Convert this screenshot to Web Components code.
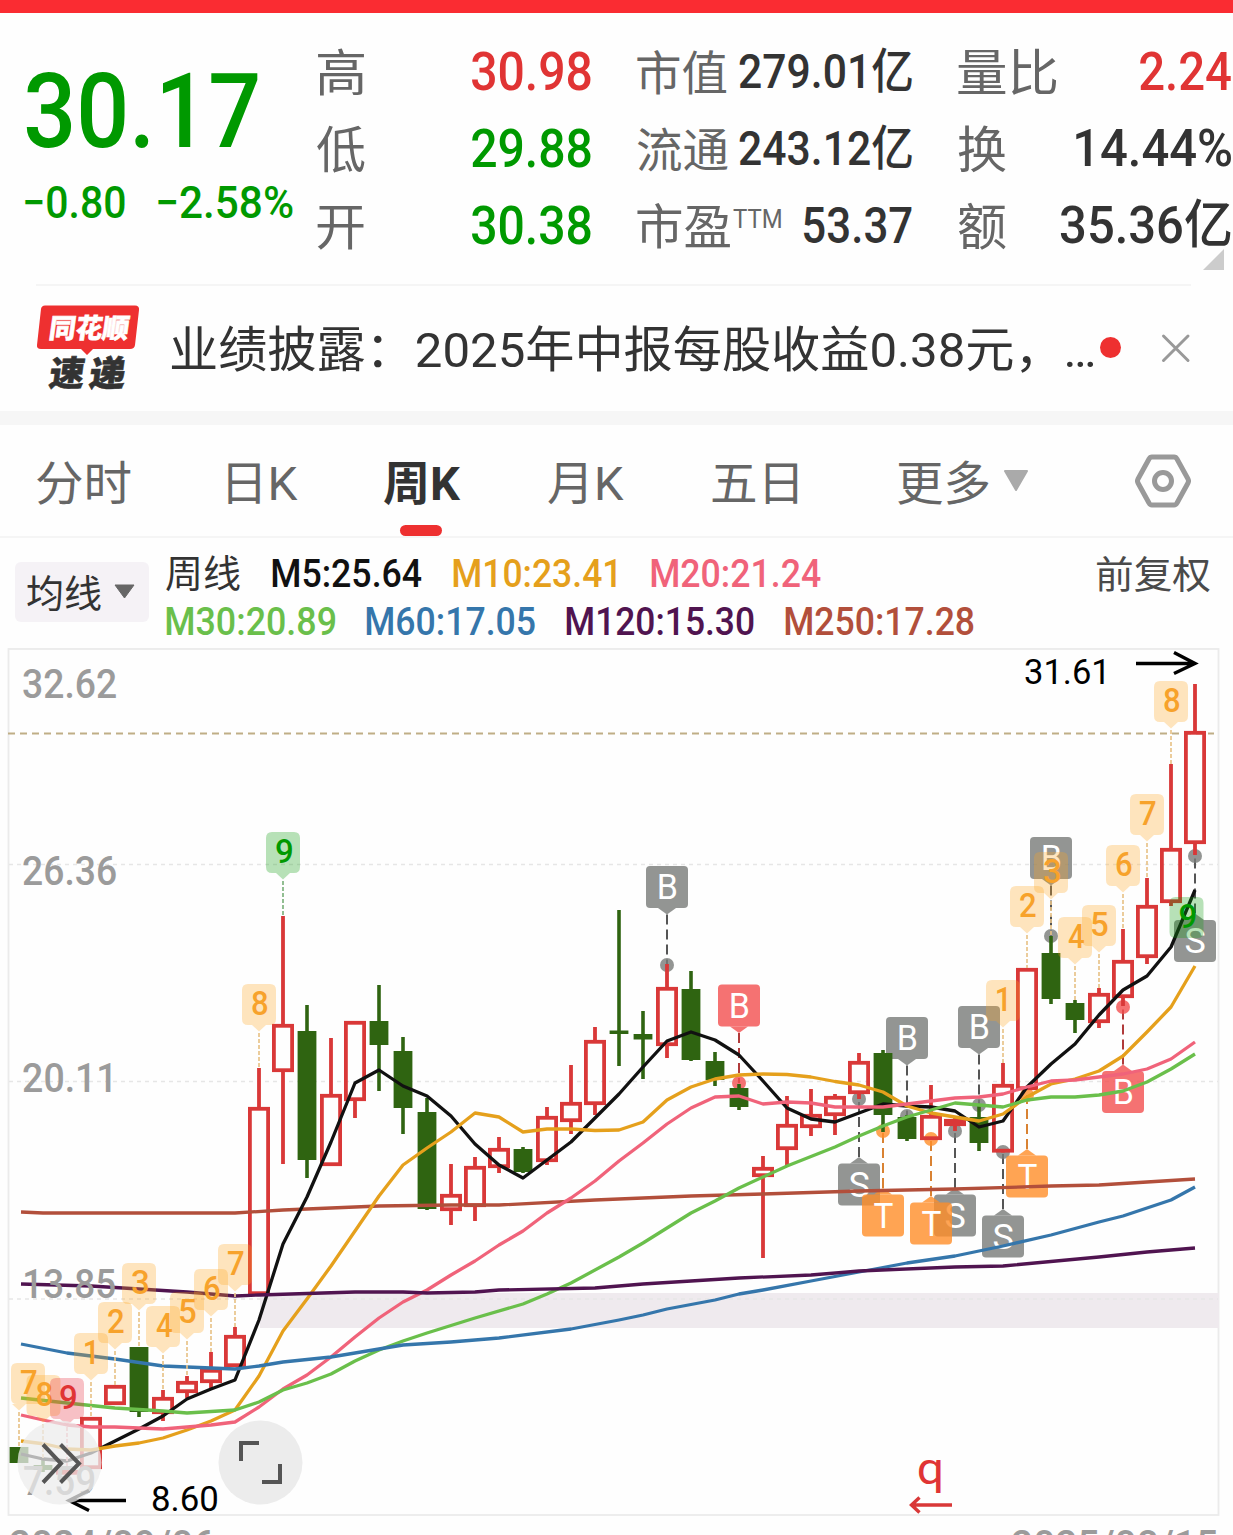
<!DOCTYPE html>
<html lang="zh-CN">
<head>
<meta charset="utf-8">
<title>周K</title>
<style>
  html, body {
    margin: 0;
    height: 1535px;
    overflow: hidden;
    background: #fefefe;
    font-family: Roboto, "Noto Sans CJK SC", sans-serif;
  }
</style>
</head>
<body>
<stock-page></stock-page>

<script>
const FONT = 'Roboto, "Noto Sans CJK SC", sans-serif'
const context = document.createElement('canvas').getContext('2d')

// Ink box of a text, so that it can be squeezed to a given width.
function measure (text, size, weight) {
  context.font = `${weight} ${size}px ${FONT}`
  const m = context.measureText(text)
  return { left: -m.actualBoundingBoxLeft, width: m.actualBoundingBoxLeft + m.actualBoundingBoxRight }
}

function createTemplate (html) {
  const template = document.createElement('template')
  template.innerHTML = html
  return template
}

const fitTemplate = createTemplate(`
  <style>
    :host { display: block; flex: none; white-space: nowrap; }
    span { display: inline-block; transform-origin: 0 50%; white-space: pre; }
    div { width: 0; }
  </style>
  <div><span><slot></slot></span></div>
`)

customElements.define('fit-text',
  /**
   * One line of text, stretched to the width in the w attribute.
   */
  class extends HTMLElement {
    constructor () {
      super()
      this.attachShadow({ mode: 'open' })
        .appendChild(fitTemplate.content.cloneNode(true))
    }

    connectedCallback () {
      const width = Number(this.getAttribute('w'))
      const size = Number(this.getAttribute('size'))
      const weight = this.getAttribute('weight') || '400'
      const ink = measure(this.textContent, size, weight)
      const scale = width / ink.width
      const span = this.shadowRoot.querySelector('span')

      this.style.width = `${width}px`
      this.style.font = `${weight} ${size}px/${Math.round(size * 1.2)}px ${FONT}`
      span.style.transform = `translateX(${-ink.left * scale}px) scaleX(${scale})`
    }
  }
)

const rowTemplate = createTemplate(`
  <style>
    :host { display: flex; justify-content: space-between; align-items: center; height: 77px; color: #333; }
    .label { display: flex; gap: 3px; padding-top: 3px; color: #666; }
  </style>
  <div class="label"><slot name="label"></slot></div>
  <slot></slot>
`)

customElements.define('quote-row',
  class extends HTMLElement {
    constructor () {
      super()
      this.attachShadow({ mode: 'open' })
        .appendChild(rowTemplate.content.cloneNode(true))
    }
  }
)

const headTemplate = createTemplate(`
  <style>
    :host { display: flex; height: 271.500px; position: relative; box-sizing: border-box; padding: 21px 2px 0 26px; }
    .price { width: 291px; color: #009900; padding-top: 16px; }
    .change { display: flex; gap: 33px; margin: 2px 0 0 -1px; }
    .columns { flex: 1; display: grid; grid-template-columns: 274px 275px 273px; column-gap: 46px; align-content: start; }
    .up { color: #e03434; }
    .down { color: #009900; }
    .tm { margin-top: 6px; }
    .corner { position: absolute; left: 1203px; top: 236px; }
  </style>
  <div class="price">
    <fit-text w="232" size="103" weight="500">30.17</fit-text>
    <div class="change">
      <fit-text w="100" size="45" weight="500">−0.80</fit-text>
      <fit-text w="135" size="45" weight="500">−2.58%</fit-text>
    </div>
  </div>
  <div class="columns">
    <div>
      <quote-row><fit-text slot="label" w="47" size="50">高</fit-text><fit-text class="up" w="119" size="53" weight="500">30.98</fit-text></quote-row>
      <quote-row><fit-text slot="label" w="48" size="50">低</fit-text><fit-text class="down" w="119" size="53" weight="500">29.88</fit-text></quote-row>
      <quote-row><fit-text slot="label" w="47" size="50">开</fit-text><fit-text class="down" w="119" size="53" weight="500">30.38</fit-text></quote-row>
    </div>
    <div>
      <quote-row><fit-text slot="label" w="90" size="47">市值</fit-text><fit-text w="173" size="48" weight="500">279.01亿</fit-text></quote-row>
      <quote-row><fit-text slot="label" w="91" size="47">流通</fit-text><fit-text w="173" size="48" weight="500">243.12亿</fit-text></quote-row>
      <quote-row><fit-text slot="label" w="93" size="48">市盈</fit-text><fit-text slot="label" class="tm" w="48" size="25">TTM</fit-text><fit-text w="108" size="50" weight="500">53.37</fit-text></quote-row>
    </div>
    <div>
      <quote-row><fit-text slot="label" w="99" size="50">量比</fit-text><fit-text class="up" w="91" size="53" weight="500">2.24</fit-text></quote-row>
      <quote-row><fit-text slot="label" w="48" size="50">换</fit-text><fit-text w="155" size="52" weight="500">14.44%</fit-text></quote-row>
      <quote-row><fit-text slot="label" w="48" size="50">额</fit-text><fit-text w="171" size="52" weight="500">35.36亿</fit-text></quote-row>
    </div>
  </div>
  <svg class="corner" width="21" height="21"><path d="M21 0V21H0Z" fill="#ccc"/></svg>
`)

customElements.define('quote-head',
  class extends HTMLElement {
    constructor () {
      super()
      this.attachShadow({ mode: 'open' })
        .appendChild(headTemplate.content.cloneNode(true))
    }
  }
)

const newsTemplate = createTemplate(`
  <style>
    :host { display: flex; align-items: center; height: 127px; margin: 0 42px 0 36px; border-top: 2px solid #f5f5f5; box-sizing: border-box; color: #333; }
    .logo { flex: none; width: 104px; height: 88px; margin: -3px 31px 0 0; overflow: visible; }
    fit-text { margin-top: 4px; }
    .dot { flex: none; width: 21px; height: 21px; border-radius: 50%; background: #ee3030; margin: -2px 40px 0 6px; }
    .close { flex: none; margin-top: -1px; }
  </style>
  <svg class="logo" viewBox="36 303 104 88">
    <path d="M45 305.500H135Q139.500 305.500 139 310L135 345Q134.500 349 130 349H93L87 355L81 349H41Q36.500 349 37 345L41 309Q41.500 305.500 45 305.500Z" fill="#ee3030"/>
    <g font-family='Roboto, "Noto Sans CJK SC", sans-serif' font-weight="900">
      <text transform="translate(48 338) skewX(-8)" font-size="27" textLength="80" lengthAdjust="spacingAndGlyphs" fill="#fff" stroke="#fff" stroke-width=".6">同花顺</text>
      <text transform="translate(48 385.500) skewX(-8)" font-size="35" textLength="35" lengthAdjust="spacingAndGlyphs" fill="#333" stroke="#333" stroke-width=".6">速</text>
      <text transform="translate(88 385.500) skewX(-8)" font-size="35" textLength="36" lengthAdjust="spacingAndGlyphs" fill="#333" stroke="#333" stroke-width=".6">递</text>
    </g>
  </svg>
  <fit-text w="923" size="48.5">业绩披露：2025年中报每股收益0.38元，…</fit-text>
  <div class="dot"></div>
  <svg class="close" width="30" height="30" fill="none" stroke="#999" stroke-width="3" stroke-linecap="round"><path d="M2.500 3L27 27.500M27 3L2.500 27.500"/></svg>
`)

customElements.define('news-bar',
  class extends HTMLElement {
    constructor () {
      super()
      this.attachShadow({ mode: 'open' })
        .appendChild(newsTemplate.content.cloneNode(true))
    }
  }
)

const tabsTemplate = createTemplate(`
  <style>
    :host { display: grid; grid-template-columns: 189px 158px 164px 164px 186px 105px 132px 56px; align-items: center; height: 127px; box-sizing: border-box; padding-left: 37px; border-top: 14px solid #f6f6f6; border-bottom: 2px solid #f5f5f5; color: #666; }
    fit-text { margin-top: 7px; }
    .active { align-self: stretch; display: flex; align-items: center; position: relative; color: #333; }
    .active::after { content: ""; position: absolute; left: 16px; bottom: 0; width: 42px; height: 11px; border-radius: 5.5px; background: #ee3030; }
  </style>
  <fit-text w="94" size="47">分时</fit-text>
  <fit-text w="70" size="47" style="margin-left:2px">日K</fit-text>
  <div class="active"><fit-text w="77" size="47" weight="700">周K</fit-text></div>
  <fit-text w="76" size="47">月K</fit-text>
  <fit-text w="86" size="47">五日</fit-text>
  <fit-text w="91" size="47">更多</fit-text>
  <svg width="26" height="22"><path d="M2 1H24L13 20Z" fill="#aaa" stroke="#aaa" stroke-width="2" stroke-linejoin="round"/></svg>
  <svg width="56" height="56" fill="none" stroke="#999" stroke-width="5" stroke-linejoin="round">
    <path d="M17 4H39Q41 4 42 6L53 26Q54 28 53 30L42 50Q41 52 39 52H17Q15 52 14 50L3 30Q2 28 3 26L14 6Q15 4 17 4Z"/>
    <circle cx="28" cy="28" r="8.500"/>
  </svg>
`)

customElements.define('period-tabs',
  class extends HTMLElement {
    constructor () {
      super()
      this.attachShadow({ mode: 'open' })
        .appendChild(tabsTemplate.content.cloneNode(true))
    }
  }
)

const legendTemplate = createTemplate(`
  <style>
    :host { display: flex; height: 110px; box-sizing: border-box; padding: 12px 23px 0 15px; }
    .select { display: flex; align-items: center; gap: 13px; width: 134px; height: 60px; margin: 12px 17px 0 0; padding: 4px 0 0 12px; box-sizing: border-box; border-radius: 6px; background: #f5f2f6; color: #333; }
    .select svg { margin-top: -6px; }
    .lines { flex: 1; }
    .line { display: flex; align-items: center; gap: 31px; height: 48px; }
    .m5 { color: #111; margin-left: 1px; }
    .m10 { color: #e5a01c; }
    .m20 { color: #f0637a; margin-left: 4px; }
    .m30 { color: #6abf4b; }
    .m60 { color: #3576ab; }
    .m120 { color: #501450; }
    .m250 { color: #b24f3b; }
    .adjust { color: #4a4a4a; padding-top: 2px; }
  </style>
  <div class="select">
    <fit-text w="74" size="38">均线</fit-text>
    <svg width="21" height="15"><path d="M1 1H20L10.500 14Z" fill="#666" stroke="#666" stroke-linejoin="round"/></svg>
  </div>
  <div class="lines">
    <div class="line">
      <fit-text w="74" size="38" style="color:#333">周线</fit-text>
      <fit-text class="m5" w="150" size="39" weight="500">M5:25.64</fit-text>
      <fit-text class="m10" w="163" size="39" weight="500">M10:23.41</fit-text>
      <fit-text class="m20" w="170" size="39" weight="500">M20:21.24</fit-text>
    </div>
    <div class="line">
      <fit-text class="m30" w="169" size="39" weight="500">M30:20.89</fit-text>
      <fit-text class="m60" w="169" size="39" weight="500">M60:17.05</fit-text>
      <fit-text class="m120" w="188" size="39" weight="500">M120:15.30</fit-text>
      <fit-text class="m250" w="189" size="39" weight="500">M250:17.28</fit-text>
    </div>
  </div>
  <fit-text class="adjust" w="113" size="38">前复权</fit-text>
`)

customElements.define('ma-legend',
  class extends HTMLElement {
    constructor () {
      super()
      this.attachShadow({ mode: 'open' })
        .appendChild(legendTemplate.content.cloneNode(true))
    }
  }
)

const STEP = 24
const FIRST = 19

// colour, high, body top, body bottom, low
const candles = [
  ['g', 1447, 1447, 1463, 1463], ['g', 1460, 1465, 1470, 1472], ['r', 1466, 1470, 1474, 1479],
  ['r', 1417, 1417, 1469, 1469], ['r', 1385, 1385, 1405, 1405], ['g', 1347, 1347, 1412, 1417],
  ['r', 1390, 1397, 1414, 1421], ['r', 1376, 1381, 1393, 1398], ['r', 1352, 1369, 1383, 1388],
  ['r', 1327, 1335, 1367, 1367], ['r', 1068, 1107, 1295, 1295], ['r', 916, 1024, 1072, 1164],
  ['g', 1005, 1031, 1160, 1178], ['r', 1038, 1094, 1166, 1166], ['r', 1021, 1021, 1101, 1118],
  ['g', 985, 1021, 1045, 1091], ['g', 1037, 1051, 1108, 1134], ['g', 1098, 1112, 1209, 1210],
  ['r', 1164, 1194, 1211, 1225], ['r', 1157, 1166, 1207, 1221], ['r', 1137, 1148, 1168, 1173],
  ['g', 1147, 1149, 1172, 1173], ['r', 1107, 1116, 1162, 1165], ['r', 1065, 1102, 1122, 1134],
  ['r', 1027, 1040, 1105, 1115], ['g', 910, 1030.5, 1034, 1066], ['g', 1011, 1034, 1039.5, 1079],
  ['r', 964, 987, 1046, 1058], ['g', 971, 989, 1060, 1061], ['g', 1052, 1061, 1080, 1086],
  ['g', 1084, 1088, 1107, 1110], ['r', 1156, 1167, 1177, 1258], ['r', 1096, 1124, 1150, 1166],
  ['r', 1089, 1114, 1128, 1136], ['r', 1094, 1096, 1116, 1135], ['r', 1053, 1061, 1094, 1099],
  ['g', 1050, 1053, 1115, 1132], ['g', 1115, 1117, 1139, 1141], ['r', 1085, 1115, 1140, 1140],
  ['r', 1117, 1119, 1126, 1131], ['g', 1105, 1117, 1143, 1151], ['r', 1063, 1084, 1152.5, 1152.5],
  ['r', 968, 968, 1090, 1090], ['g', 936, 953, 999, 1004], ['g', 1000, 1003, 1020, 1033],
  ['r', 988, 993, 1023, 1028], ['r', 929, 960, 998, 1006], ['r', 878, 905, 958, 964],
  ['r', 764, 848, 903, 906], ['r', 684, 731, 844, 855]
]

const averages = [
  ['#b24f3b', '21,1212 43,1213 235,1213 283,1210 331,1208 379,1206 451,1205 499,1205 595,1200 691,1196 763,1194 859,1191 955,1189 1051,1186 1099,1185 1147,1182 1195,1179'],
  ['#111', '21,1454 43,1459 67,1461 91,1453 115,1441 139,1429 163,1416 187,1399 211,1389 235,1380 259,1320 283,1244 307,1197 331,1142 355,1083 379,1070 403,1086 427,1096 451,1116 475,1144 499,1165 523,1178 547,1160 571,1142 595,1118 619,1094 643,1067 667,1041 691,1032 715,1040 739,1055 763,1081 787,1108 811,1119 835,1122 859,1113 883,1104 907,1106 931,1107 955,1111 979,1127 1003,1121 1027,1087 1051,1064 1075,1044 1099,1015 1123,990 1147,976 1171,947 1195,890'],
  ['#e5a01c', '21,1441 45,1444 67,1449 91,1450 115,1446 139,1443 163,1438 187,1430 211,1421 235,1410 259,1376 283,1331 307,1299 331,1266 355,1231 379,1196 403,1165 427,1148 451,1132 475,1113 499,1117 523,1132 547,1129 571,1129 595,1130.5 619,1130 643,1122 667,1100 691,1087 715,1079 739,1075 763,1074 787,1074.5 811,1077 835,1081.5 859,1085 883,1092 907,1106 931,1113 955,1117 979,1121 1003,1114 1027,1097 1051,1084 1075,1079 1099,1071 1123,1056 1147,1032 1171,1007 1195,966'],
  ['#f0637a', '21,1415 43,1420 67,1425 91,1427 115,1427 163,1429 187,1427 211,1425 235,1422 259,1407 283,1389 307,1375 331,1357 355,1337 379,1318 403,1302 427,1290 451,1275 475,1261 499,1245 523,1231 547,1213 571,1198 595,1181 619,1161 643,1143 667,1124 691,1108 715,1097 739,1096 763,1104 787,1102 811,1103 835,1107 883,1107 907,1104 931,1101 955,1098 979,1097 1003,1094 1027,1087 1051,1081 1075,1080 1099,1077 1123,1074 1147,1069 1171,1059 1195,1042'],
  ['#6abf4b', '21,1398 67,1403 115,1408 163,1411 187,1413 235,1410 259,1402 283,1390 307,1383 331,1374 355,1361 379,1350 403,1341 427,1333 475,1318 523,1304 547,1294 571,1283 619,1257 643,1243 667,1228 691,1213 715,1201 739,1188 787,1166 835,1147 859,1136 883,1126 907,1117 931,1110 955,1103 979,1105 1003,1107 1027,1100 1051,1097 1075,1097 1099,1095 1123,1091 1147,1082 1171,1069 1195,1054'],
  ['#3576ab', '21,1344 67,1353 115,1359 163,1366 211,1368 235,1369 259,1366 283,1362 331,1357 379,1349 403,1345 451,1342 499,1338 571,1329 619,1320 643,1315 667,1309 715,1300 739,1294 763,1290 811,1281 859,1272 907,1263 955,1256 1003,1246 1051,1235 1099,1222 1123,1216 1171,1200 1195,1187'],
  ['#501450', '21,1284 91,1286 139,1289 187,1292 235,1296 259,1295 355,1292 403,1292 427,1293 475,1292 499,1290 595,1288 643,1284 691,1281 739,1278 811,1275 859,1271 955,1267 1003,1266 1099,1257 1147,1252 1195,1248']
]

// letter, kind, x, top of the box, y of the dot
const signals = [
  ['B', 'grey', 667, 866, 965], ['B', 'red', 739, 984.5, 1083], ['S', 'grey', 859, 1163.5, 1099],
  ['T', 'orange', 883, 1194.5, 1131], ['B', 'grey', 907, 1017, 1116], ['S', 'grey', 955, 1194.5, 1131],
  ['T', 'orange', 931, 1202.5, 1139], ['B', 'grey', 979, 1006, 1105], ['S', 'grey', 1003, 1215.5, 1152],
  ['T', 'orange', 1027, 1155.5, 1095], ['B', 'grey', 1051, 837, 936], ['B', 'red', 1123, 1071, 1007],
  ['S', 'grey', 1195, 920, 856]
]

const signalColors = {
  grey: ['#787a78', '#555'],
  red: ['#f24f4f', '#b03a3a'],
  orange: ['#ff8d28', '#d98232']
}

// digit, kind, x of the candle, top of the box, top of the candle, x of the box
const counts = [
  ['7', 'amber', 19, 1363, 1447, 28], ['8', 'amber', 43, 1375, 1460, 43.5], ['9', 'red', 67, 1378, 1466],
  ['1', 'amber', 91, 1333, 1417], ['2', 'amber', 115, 1302, 1385], ['3', 'amber', 139, 1263, 1347],
  ['4', 'amber', 163, 1306, 1390], ['5', 'amber', 187, 1292, 1376], ['6', 'amber', 211, 1269, 1352],
  ['7', 'amber', 235, 1244, 1327], ['8', 'amber', 259, 984, 1068], ['9', 'green', 283, 832, 916],
  ['1', 'amber', 1003, 980, 1063], ['2', 'amber', 1027, 886, 968], ['3', 'amber', 1051, 852, 936],
  ['4', 'amber', 1075, 917, 1000], ['5', 'amber', 1099, 905, 988], ['6', 'amber', 1123, 845, 929],
  ['7', 'amber', 1147, 794, 878], ['8', 'amber', 1171, 681, 764], ['9', 'green', 1195, 897, 0, 1186.5]
]

const countColors = {
  amber: ['#ffa51e', '#f7a22b', '#e8c48a'],
  green: ['#0a9b0a', '#009900', '#7fb37f'],
  red: ['#e8293c', '#e03434', '#f0a0a8']
}

const chartTemplate = createTemplate(`
  <style>
    :host { display: block; height: 887px; }
    svg { display: block; }
    text { font-family: Roboto, "Noto Sans CJK SC", sans-serif; }
  </style>
  <svg width="1233" height="887" viewBox="0 648 1233 887"></svg>
`)

customElements.define('candle-chart',
  /**
   * Weekly candles with moving averages, trade signals and counts.
   */
  class extends HTMLElement {
    #svg

    constructor () {
      super()
      this.attachShadow({ mode: 'open' })
        .appendChild(chartTemplate.content.cloneNode(true))

      this.#svg = this.shadowRoot.querySelector('svg')
    }

    connectedCallback () {
      this.#svg.innerHTML = [
        this.#grid(),
        signals.map(s => this.#signal(...s)).join(''),
        candles.map((c, i) => this.#candle(FIRST + i * STEP, ...c)).join(''),
        averages.map(([color, points]) =>
          `<polyline points="${points}" fill="none" stroke="${color}" stroke-width="3.3" stroke-linejoin="round"/>`).join(''),
        counts.map(c => this.#count(...c)).join(''),
        this.#labels(),
        this.#marks(),
        this.#buttons()
      ].join('')
    }

    #text (text, x, baseline, width, size, weight, color) {
      const ink = measure(text, size, weight)
      const scale = width / ink.width
      return `<text transform="translate(${x - ink.left * scale} ${baseline}) scale(${scale} 1)" font-size="${size}" font-weight="${weight}" fill="${color}">${text}</text>`
    }

    #grid () {
      const lines = [864.5, 1081.5, 1299].map(y =>
        `<path d="M9 ${y}H1218" stroke="#e6e6e6" stroke-width="1.500" stroke-dasharray="4 4"/>`).join('')
      return `
        <rect x="8.500" y="649" width="1210" height="866" fill="none" stroke="#ebebeb" stroke-width="1.800"/>
        <rect x="260" y="1293" width="959" height="35" fill="#efeaee"/>
        ${lines}
        <path d="M8 733.500H1214" stroke="#bfae86" stroke-width="2" stroke-dasharray="7 5"/>`
    }

    #candle (x, kind, high, top, bottom, low) {
      if (kind === 'g') {
        return `<path d="M${x} ${high}V${low}" stroke="#2f6411" stroke-width="3.600"/>
          <rect x="${x - 9.4}" y="${top}" width="18.800" height="${bottom - top}" fill="#2f6411"/>`
      }
      return `<path d="M${x} ${high}V${top + 1}M${x} ${bottom - 1}V${low}" stroke="#d93838" stroke-width="3.800"/>
        <rect x="${x - 9.1}" y="${top + 1.8}" width="18.200" height="${Math.max(bottom - top - 3.6, 1)}" fill="none" stroke="#d93838" stroke-width="3.800"/>`
    }

    #signal (letter, kind, x, top, dot) {
      const [fill, line] = signalColors[kind]
      const below = dot < top
      const edge = below ? top : top + 42
      const tip = below ? top - 6.5 : top + 48.5
      const width = { B: 17.5, S: 19.5, T: 20 }[letter]
      return `
        <path d="M${x} ${tip}V${dot}" stroke="${line}" stroke-width="2" stroke-dasharray="10 5"/>
        <circle cx="${x}" cy="${dot}" r="7" fill="${fill}" fill-opacity=".8"/>
        <g fill="${fill}" fill-opacity=".8">
          <rect x="${x - 21}" y="${top}" width="42" height="42" rx="4"/>
          <path d="M${x - 9} ${edge}L${x} ${tip}L${x + 9} ${edge}Z"/>
        </g>
        ${this.#text(letter, x + 0.4 - width / 2, top + 33, width, 35, 400, '#fff')}`
    }

    #count (digit, kind, x, top, end, box = x) {
      const [fill, color, line] = countColors[kind]
      const b = top + 41
      const pointer = end ? `L${x + 7} ${b}L${x} ${b + 6.5}L${x - 7} ${b}` : ''
      const l = box - 17
      const r = box + 17
      const width = digit === '1' ? 10 : 16
      const shift = digit === '1' ? -1.5 : 1
      return `
        ${end ? `<path d="M${x} ${b + 8}V${end}" stroke="${line}" stroke-width="1.700" stroke-dasharray="4 2"/>` : ''}
        <path d="M${l + 6} ${top}H${r - 6}Q${r} ${top} ${r} ${top + 6}V${b - 6}Q${r} ${b} ${r - 6} ${b}${pointer}L${l + 6} ${b}Q${l} ${b} ${l} ${b - 6}V${top + 6}Q${l} ${top} ${l + 6} ${top}Z" fill="${fill}" fill-opacity=".29"/>
        ${this.#text(digit, box + shift - width / 2, top + 31, width, 33, 500, color)}`
    }

    #labels () {
      return [
        ['32.62', 23, 698, 93], ['26.36', 23, 885, 93], ['20.11', 23, 1092, 88],
        ['13.85', 25, 1298, 90], ['7.59', 24, 1495, 70],
        ['2024/09/06', 10, 1559, 204], ['2025/08/15', 1012, 1559, 205]
      ].map(([text, x, y, width]) => this.#text(text, x, y, width, 41, 500, '#9b9b9b')).join('')
    }

    #marks () {
      return `
        ${this.#text('31.61', 1025, 684, 79, 35.5, 400, '#000')}
        <path d="M1136 663.500H1193M1174 652.500L1195 663.500L1174 673.500" fill="none" stroke="#000" stroke-width="3.400"/>
        ${this.#text('8.60', 152, 1510.5, 65, 35.5, 400, '#000')}
        <path d="M126 1500.500H70M89 1490.500L69 1500.500L89 1510.500" fill="none" stroke="#000" stroke-width="3.400"/>
        ${this.#text('q', 919, 1484, 22.5, 45, 400, '#e03434')}
        <path d="M952 1505H912M919.500 1497.500L911.500 1505L919.500 1512.500" fill="none" stroke="#d93838" stroke-width="3.400"/>`
    }

    #buttons () {
      return `
        <g fill="#ececec" fill-opacity=".75">
          <circle cx="59.500" cy="1462.500" r="42"/>
          <circle cx="260.500" cy="1462.500" r="42" fill-opacity="1"/>
        </g>
        <g fill="none" stroke="#555" stroke-width="4">
          <path d="M43 1444.500L61 1463.500L43 1482.500M60.500 1444.500L79 1463.500L60.500 1482.500"/>
          <path d="M259 1443H241V1461M262 1482H280V1464"/>
        </g>`
    }
  }
)

const pageTemplate = createTemplate(`
  <style>
    :host { display: flex; flex-direction: column; width: 1233px; height: 1535px; overflow: hidden; }
    .status { height: 12.500px; background: #fa2c32; flex: none; }
    quote-head, news-bar, period-tabs, ma-legend, candle-chart { flex: none; }
  </style>
  <div class="status"></div>
  <quote-head></quote-head>
  <news-bar></news-bar>
  <period-tabs></period-tabs>
  <ma-legend></ma-legend>
  <candle-chart></candle-chart>
`)

customElements.define('stock-page',
  class extends HTMLElement {
    constructor () {
      super()
      this.attachShadow({ mode: 'open' })
        .appendChild(pageTemplate.content.cloneNode(true))
    }
  }
)
</script>
</body>
</html>
